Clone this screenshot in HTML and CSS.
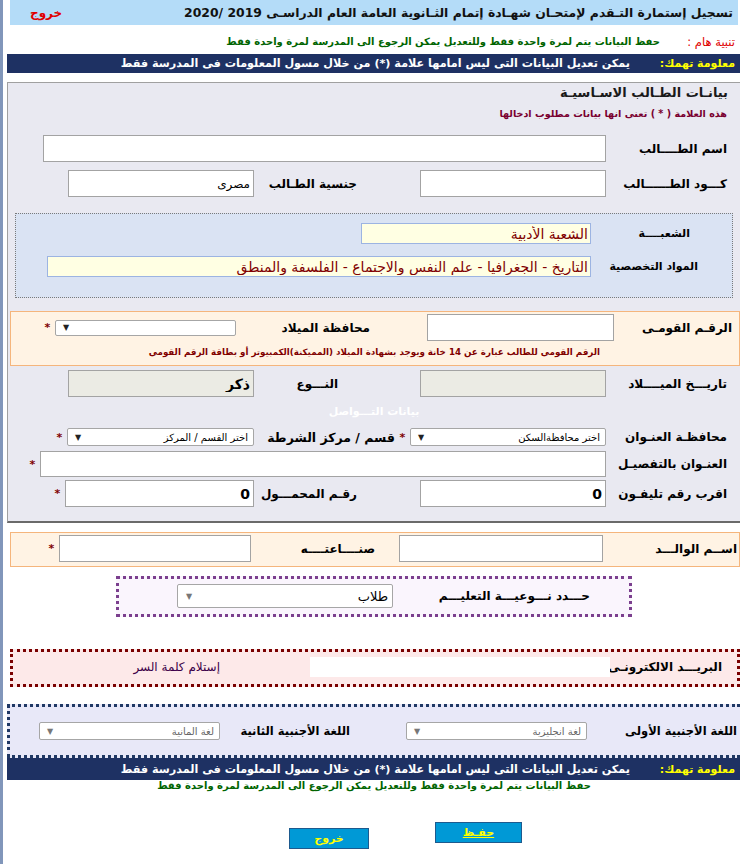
FILE: index.html
```html
<!DOCTYPE html>
<html lang="ar" dir="rtl">
<head>
<meta charset="utf-8">
<title>تسجيل إستمارة التقدم</title>
<link rel="stylesheet" href="styles.css">
</head>
<body>
<div class="page">
  <div class="header">
    <div class="title">تسجيل إستمارة التـقدم لإمتحـان شهـادة إتمام الثـانوية العامة العام الدراسـى 2019 /2020</div>
    <a class="exit-link">خروج</a>
  </div>

  <div class="notice">
    <span class="notice-label">تنبية هام :</span>
    <span class="notice-text">حفظ البيانات يتم لمرة واحدة فقط وللتعديل يمكن الرجوع الى المدرسة لمرة واحدة فقط</span>
  </div>

  <div class="infobar">
    <span class="info-label">معلومة تهمك:</span>
    <span class="info-text">يمكن تعديل البيانات التى ليس امامها علامة (*) من خلال مسول المعلومات فى المدرسة فقط</span>
  </div>

  <div class="mainbox">
    <div class="box-title">بيانـات الطـالب الاسـاسيـة</div>
    <div class="box-sub">هذه العلامة ( * ) تعنى انها بيانات مطلوب ادخالها</div>

    <div class="row r-name">
      <span class="lbl1">اسم الطــــالب</span>
      <input class="field w-name" type="text" value="">
    </div>

    <div class="row r-code">
      <span class="lbl1">كـــود الطــــــالب</span>
      <input class="field w186" type="text" value="">
      <span class="lbl2">جنسية الطـالب</span>
      <input class="field w186" type="text" value="مصرى">
    </div>

    <div class="shubha">
      <div class="row">
        <span class="sh-lbl sh-lbl1">الشعبــــة</span>
        <input class="yfield w230" type="text" value="الشعبة الأدبية" readonly>
      </div>
      <div class="row sh-row2">
        <span class="sh-lbl sh-lbl2">المواد التخصصية</span>
        <input class="yfield w544" type="text" value="التاريخ - الجغرافيا - علم النفس والاجتماع - الفلسفة والمنطق" readonly>
      </div>
    </div>

    <div class="obox">
      <div class="row">
        <span class="o-lbl1">الرقـم القومـى</span>
        <input class="field w187" type="text" value="">
        <span class="o-lbl2">محافظة الميلاد</span>
        <div class="sel sel-birth"><span class="sel-text"></span><span class="arrow">▼</span></div>
        <span class="star">*</span>
      </div>
      <div class="o-note">الرقم القومي للطالب عبارة عن 14 خانة ويوجد بشهادة الميلاد (المميكنة)الكمبيوتر أو بطاقة الرقم القومي</div>
    </div>

    <div class="row r-birth">
      <span class="lbl1">تاريـــخ الميــــلاد</span>
      <input class="field gray w186" type="text" value="" readonly>
      <span class="lbl2 lbl2-type">النـــوع</span>
      <input class="field gray bold w186" type="text" value="ذكر" readonly>
    </div>

    <div class="contact-title">بيانات التـــواصل</div>

    <div class="row r-gov">
      <span class="lbl1">محافظـة العنـوان</span>
      <div class="sel w196"><span class="sel-text">اختر محافظةالسكن</span><span class="arrow">▼</span></div>
      <span class="star">*</span>
      <span class="lbl-police">قسم / مركز الشرطة</span>
      <div class="sel w187"><span class="sel-text">اختر القسم / المركز</span><span class="arrow">▼</span></div>
      <span class="star">*</span>
    </div>

    <div class="row r-addr">
      <span class="lbl1">العنـوان بالتفصيـل</span>
      <input class="field w566 h26" type="text" value="">
      <span class="star">*</span>
    </div>

    <div class="row r-phone">
      <span class="lbl1">اقرب رقم تليفـون</span>
      <input class="field bold w186" type="text" value="0">
      <span class="lbl2">رقـم المحمـــول</span>
      <input class="field bold w189" type="text" value="0">
      <span class="star">*</span>
    </div>
  </div>

  <div class="obox obox2">
    <div class="row">
      <span class="o2-lbl1">اســم الوالـــد</span>
      <input class="field w204" type="text" value="">
      <span class="o2-lbl2">صنــــاعتــــه</span>
      <input class="field w192" type="text" value="">
      <span class="star">*</span>
    </div>
  </div>

  <div class="pbox">
    <div class="row">
      <span class="p-lbl">حـــدد نـــوعيـــة التعليـــم</span>
      <div class="sel sel-big"><span class="sel-text">طلاب</span><span class="arrow gray-arrow">▼</span></div>
    </div>
  </div>

  <div class="mbox">
    <div class="row">
      <span class="m-lbl">البريـــد الالكترونـى</span>
      <input class="email" type="text" value="">
      <a class="pass-link">إستلام كلمة السر</a>
    </div>
  </div>

  <div class="lbox">
    <div class="row">
      <span class="l-lbl1">اللغة الأجنبية الأولى</span>
      <div class="sel sel-lang"><span class="sel-text">لغة انجليزية</span><span class="arrow gray-arrow">▼</span></div>
      <span class="l-lbl2">اللغة الأجنبية الثانية</span>
      <div class="sel sel-lang"><span class="sel-text">لغة المانية</span><span class="arrow gray-arrow">▼</span></div>
    </div>
  </div>

  <div class="infobar infobar2">
    <span class="info-label">معلومة تهمك:</span>
    <span class="info-text">يمكن تعديل البيانات التى ليس امامها علامة (*) من خلال مسول المعلومات فى المدرسة فقط</span>
  </div>

  <div class="bottom-note">حفظ البيانات يتم لمرة واحدة فقط وللتعديل يمكن الرجوع الى المدرسة لمرة واحدة فقط</div>

  <div class="buttons">
    <button class="btn btn-save" type="button">حفـظ</button>
    <button class="btn btn-exit" type="button">خروج</button>
  </div>
</div>
</body>
</html>
```

FILE: styles.css
```css
* { box-sizing: border-box; }

html, body {
  margin: 0;
  padding: 0;
}

body {
  background: linear-gradient(to right, #8196ba 0, #8196ba 3px, #ffffff 3px);
  font-family: "DejaVu Sans", "Liberation Sans", sans-serif;
  color: #000;
}

.page {
  width: 740px;
  padding-bottom: 15px;
}

.row {
  display: flex;
  align-items: center;
}

/* header */
.header {
  margin: 0 2px 0 10px;
  height: 25px;
  background: #b4dcf8;
  display: flex;
  align-items: center;
  justify-content: space-between;
  padding: 0 5px 0 20px;
}

.title {
  font-size: 12.4px;
  font-weight: bold;
  color: #111;
  white-space: nowrap;
}

.exit-link {
  color: #e00000;
  font-weight: bold;
  font-size: 12px;
}

.notice {
  margin-top: 8px;
  height: 17px;
  display: flex;
  align-items: center;
  padding-right: 5px;
  white-space: nowrap;
}

.notice-label {
  color: #e00000;
  font-size: 11.5px;
  width: 75px;
}

.notice-text {
  color: #006400;
  font-size: 10px;
  font-weight: bold;
}

.infobar {
  margin: 4px 0 0 7px;
  height: 19px;
  background: #1e3163;
  display: flex;
  align-items: center;
  padding-right: 5px;
  white-space: nowrap;
}

.info-label {
  color: #ffff00;
  font-size: 11px;
  font-weight: bold;
  width: 105px;
}

.info-text {
  color: #ffffff;
  font-size: 11.2px;
  font-weight: bold;
}

/* main box */
.mainbox {
  margin: 9px 0 0 7px;
  background: #e9e9f1;
  border-top: 1px solid #a0a0a0;
  border-left: 1px solid #a0a0a0;
  border-bottom: 2px solid #6a6a6a;
  padding: 2px 0 14px 0;
}

.box-title {
  height: 20px;
  padding-right: 12px;
  font-size: 13px;
  font-weight: bold;
  color: #1a1a1a;
}

.box-sub {
  margin-top: 3px;
  height: 18px;
  padding-right: 13px;
  font-size: 9.6px;
  font-weight: bold;
  color: #7a0030;
}

.lbl1 {
  width: 134px;
  padding-right: 13px;
  font-size: 12px;
  font-weight: bold;
  white-space: nowrap;
}

.lbl2 {
  width: 166px;
  padding-right: 63px;
  font-size: 12px;
  font-weight: bold;
  white-space: nowrap;
}

.lbl2-type { padding-right: 82px; }

.lbl-police {
  width: 141px;
  font-size: 12.5px;
  font-weight: bold;
  white-space: nowrap;
}

.star {
  width: 15px;
  text-align: center;
  color: #800000;
  font-size: 11px;
  font-weight: bold;
}

.field {
  height: 27px;
  border: 1px solid #a3a3a3;
  background: #fff;
  font-family: "DejaVu Sans", "Liberation Sans", sans-serif;
  font-size: 12px;
  padding: 0 3px;
  color: #000;
  margin: 0;
}

.field.gray { background: #ebebe4; }
.field.bold { font-weight: bold; font-size: 14px; }
.h26 { height: 26px; }

.w-name { width: 563px; }
.w186 { width: 186px; }
.w187 { width: 187px; }
.w189 { width: 189px; }
.w192 { width: 192px; }
.w196 { width: 196px; }
.w204 { width: 204px; }
.w566 { width: 566px; }

.r-name { margin-top: 9px; }
.r-code { margin-top: 8px; }

/* shubha box */
.shubha {
  margin: 16px 7px 0 7px;
  background: #dae3f3;
  border: 1px dotted #7a7a7a;
  padding: 9px 0 20px 0;
}

.sh-row2 { margin-top: 12px; }

.sh-lbl {
  width: 141px;
  font-size: 11px;
  font-weight: bold;
  white-space: nowrap;
}
.sh-lbl1 { padding-right: 42px; }
.sh-lbl2 { padding-right: 34px; }

.yfield {
  height: 21px;
  border: 1px solid #9cb4e2;
  background: #ffffe3;
  color: #800000;
  font-family: "DejaVu Sans", "Liberation Sans", sans-serif;
  font-size: 14px;
  padding: 0 2px;
  margin: 0;
}
.w230 { width: 230px; }
.w544 { width: 544px; }

/* orange boxes */
.obox {
  margin: 13px 0 0 2px;
  background: #fff3e4;
  border: 1px solid #f5b57c;
  padding: 2px 0 0 0;
  height: 55px;
}

.o-lbl1 {
  width: 125px;
  padding-right: 7px;
  font-size: 12px;
  font-weight: bold;
  white-space: nowrap;
}

.o-lbl2 {
  width: 191px;
  padding-right: 57px;
  font-size: 12px;
  font-weight: bold;
  white-space: nowrap;
}

.o-note {
  margin-top: 6px;
  padding-right: 139px;
  font-size: 8.7px;
  font-weight: bold;
  color: #800000;
  white-space: nowrap;
}

.obox2 {
  margin: 9px 0 0 10px;
  height: 35px;
}

.o2-lbl1 {
  width: 136px;
  padding-right: 2px;
  font-size: 12px;
  font-weight: bold;
  white-space: nowrap;
}

.o2-lbl2 {
  width: 148px;
  padding-right: 24px;
  font-size: 12px;
  font-weight: bold;
  white-space: nowrap;
}

/* selects */
.sel {
  height: 18px;
  border: 1px solid #a6a6a6;
  border-radius: 2px;
  background: #fff;
  display: flex;
  align-items: center;
  justify-content: space-between;
  padding: 0 5px 0 7px;
  font-size: 10px;
  white-space: nowrap;
}

.arrow {
  font-size: 8px;
  color: #222;
}
.gray-arrow { color: #777; }

.sel-birth {
  width: 181px;
  height: 16px;
}

.r-birth { margin-top: 4px; }

.contact-title {
  margin-top: 8px;
  height: 16px;
  text-align: center;
  color: #ffffff;
  font-size: 11px;
  font-weight: bold;
}

.r-gov { margin-top: 7px; }
.r-addr { margin-top: 5px; }
.r-phone { margin-top: 3px; }

/* purple box */
.pbox {
  margin: 9px 108px 0 116px;
  background: #faf5fd;
  border: 3px dotted #7b3f8e;
  padding: 5px 0 6px 0;
}

.p-lbl {
  width: 236px;
  padding-right: 39px;
  font-size: 12px;
  font-weight: bold;
  white-space: nowrap;
}

.sel-big {
  width: 216px;
  height: 24px;
  font-size: 13px;
  padding: 0 4px 0 8px;
}

/* email box */
.mbox {
  margin: 32px 0 0 10px;
  background: #fde9e9;
  border: 3px dotted #7a0000;
  height: 38px;
  padding-top: 5px;
}

.m-lbl {
  width: 127px;
  padding-right: 15px;
  font-size: 12px;
  font-weight: bold;
  white-space: nowrap;
}

.email {
  width: 300px;
  height: 20px;
  border: none;
  background: #fff;
  margin: 0 0 0 90px;
  padding: 0;
}

.pass-link {
  font-size: 12px;
  color: #3c0048;
  white-space: nowrap;
}

/* language box */
.lbox {
  margin: 17px 0 0 7px;
  background: #e8e8f8;
  border-top: 3px dotted #1f3864;
  border-left: 3px dotted #1f3864;
  border-bottom: 3px dotted #1f3864;
  padding: 15px 0 15px 0;
}

.l-lbl1 {
  width: 153px;
  padding-right: 3px;
  font-size: 11.5px;
  font-weight: bold;
  white-space: nowrap;
}

.l-lbl2 {
  width: 186px;
  padding-right: 56px;
  font-size: 11.5px;
  font-weight: bold;
  white-space: nowrap;
}

.sel-lang {
  width: 181px;
  color: #666;
}

.infobar2 {
  margin-top: 0;
  height: 22px;
}

.bottom-note {
  margin-left: 8px;
  height: 16px;
  text-align: center;
  color: #006400;
  font-size: 10px;
  font-weight: bold;
  white-space: nowrap;
}

.buttons {
  display: flex;
  align-items: flex-start;
  gap: 66px;
  padding-right: 218px;
  margin-top: 26px;
}

.btn {
  height: 21px;
  background: #0099d6;
  border: 1px solid #1d5a8e;
  color: #ffff00;
  font-family: "DejaVu Sans", "Liberation Sans", sans-serif;
  font-weight: bold;
  font-size: 11px;
  padding: 0;
  margin: 0;
}

.btn-save {
  width: 87px;
  text-decoration: underline;
}

.btn-exit {
  width: 80px;
  margin-top: 6px;
}
```
